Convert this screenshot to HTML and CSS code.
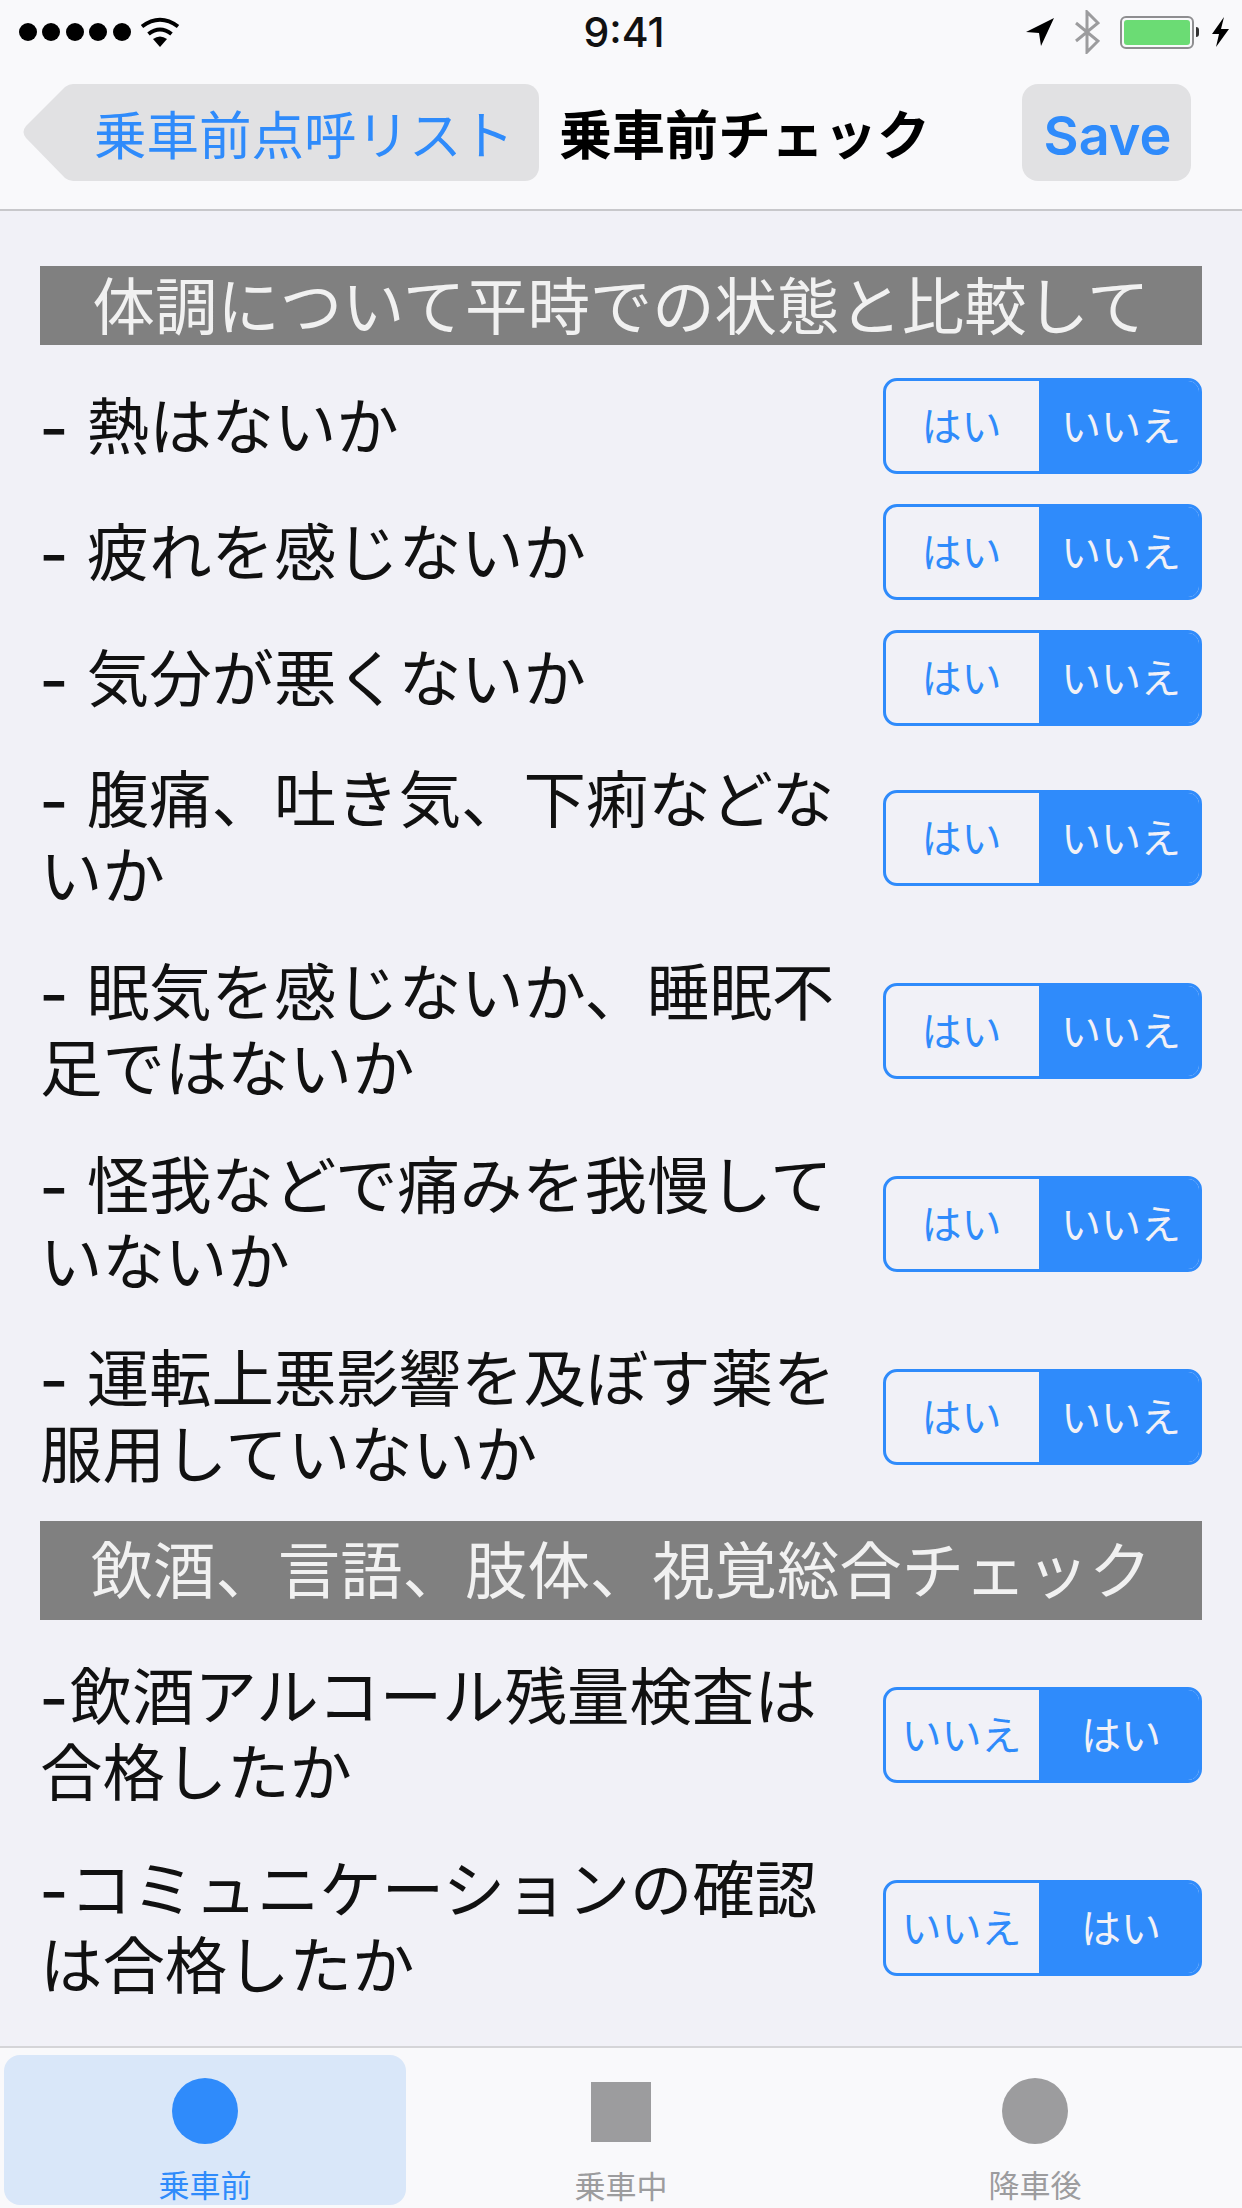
FILE: index.html
```html
<!DOCTYPE html>
<html lang="ja">
<head>
  <meta charset="UTF-8">
  <meta name="viewport" content="width=device-width, initial-scale=1.0">
  <title>乗車前チェック</title>
  <link rel="stylesheet" href="styles.css">
</head>
<body>
  <div class="screen">
    <header class="top">
      <div class="status">
        <div class="status-left">
          <span class="dot"></span><span class="dot"></span><span class="dot"></span><span class="dot"></span><span class="dot"></span>
          <svg class="wifi" width="40" height="30" viewBox="0 0 40 30">
            <path d="M20 30 L13 22 Q20 17 27 22 Z" fill="#000"/>
            <path d="M8.5 17 Q20 8 31.500 17" fill="none" stroke="#000" stroke-width="4"/>
            <path d="M2 9.500 Q20 -4 38 9.500" fill="none" stroke="#000" stroke-width="4"/>
          </svg>
        </div>
        <div class="status-time">9:41</div>
        <div class="status-right">
          <svg width="28" height="28" viewBox="0 0 28 28"><path d="M28 0 L0 14 L13 15 L15 28 Z" fill="#000"/></svg>
          <svg class="bt" width="26" height="44" viewBox="0 0 26 44">
            <path d="M2 13 L24 31 L13 42 L13 2 L24 13 L2 31" fill="none" stroke="#9c9c9e" stroke-width="3"/>
          </svg>
          <div class="battery"><div class="battery-fill"></div></div>
          <span class="battery-nub"></span>
          <svg class="bolt" width="17" height="30" viewBox="0 0 17 30"><path d="M12 0 L0 17 L7 17 L4 30 L17 12 L9 12 Z" fill="#000"/></svg>
        </div>
      </div>
      <nav class="nav">
        <a class="back">
          <svg class="back-tip" width="57" height="97" viewBox="0 0 57 97"><path d="M57 0 L50 0 Q46 0 42 3 L3 42 Q-2 48 3 54 L42 94 Q46 97 50 97 L57 97 Z" fill="#e1e1e3"/></svg>
          <span class="back-label">乗車前点呼リスト</span>
        </a>
        <h1 class="title">乗車前チェック</h1>
        <a class="save">Save</a>
      </nav>
    </header>

    <main class="content">
      <h2 class="section">体調について平時での状態と比較して</h2>
      <div class="row">
        <p class="question">- 熱はないか</p>
        <div class="seg"><span>はい</span><span class="on">いいえ</span></div>
      </div>
      <div class="row">
        <p class="question">- 疲れを感じないか</p>
        <div class="seg"><span>はい</span><span class="on">いいえ</span></div>
      </div>
      <div class="row">
        <p class="question">- 気分が悪くないか</p>
        <div class="seg"><span>はい</span><span class="on">いいえ</span></div>
      </div>
      <div class="row tall">
        <p class="question">- 腹痛、吐き気、下痢などないか</p>
        <div class="seg"><span>はい</span><span class="on">いいえ</span></div>
      </div>
      <div class="row tall">
        <p class="question">- 眠気を感じないか、睡眠不足ではないか</p>
        <div class="seg"><span>はい</span><span class="on">いいえ</span></div>
      </div>
      <div class="row tall">
        <p class="question">- 怪我などで痛みを我慢していないか</p>
        <div class="seg"><span>はい</span><span class="on">いいえ</span></div>
      </div>
      <div class="row tall">
        <p class="question">- 運転上悪影響を及ぼす薬を服用していないか</p>
        <div class="seg"><span>はい</span><span class="on">いいえ</span></div>
      </div>

      <h2 class="section second">飲酒、言語、肢体、視覚総合チェック</h2>
      <div class="row tall">
        <p class="question">-飲酒アルコール残量検査は合格したか</p>
        <div class="seg"><span>いいえ</span><span class="on">はい</span></div>
      </div>
      <div class="row tall">
        <p class="question">-コミュニケーションの確認は合格したか</p>
        <div class="seg"><span>いいえ</span><span class="on">はい</span></div>
      </div>
    </main>

    <footer class="tabs">
      <div class="tab active">
        <span class="tab-icon circle"></span>
        <span class="tab-label">乗車前</span>
      </div>
      <div class="tab">
        <span class="tab-icon square"></span>
        <span class="tab-label">乗車中</span>
      </div>
      <div class="tab">
        <span class="tab-icon circle"></span>
        <span class="tab-label">降車後</span>
      </div>
    </footer>
  </div>
</body>
</html>
```

FILE: styles.css
```css
* { box-sizing: border-box; }
body {
  margin: 0;
  background: #f1f1f7;
  color: #111;
  font-family: "Noto Sans CJK JP", "Noto Sans", sans-serif;
}
.screen {
  width: 1242px;
  height: 2208px;
  display: flex;
  flex-direction: column;
  overflow: hidden;
}

/* status bar + nav */
.top {
  height: 211px;
  background: #f9f9fb;
  border-bottom: 2px solid #c8c8cb;
}
.status {
  height: 64px;
  padding: 0 13px 0 19px;
  display: flex;
  align-items: center;
  justify-content: space-between;
}
.status-left, .status-right {
  width: 440px;
  display: flex;
  align-items: center;
}
.status-right { justify-content: flex-end; }
.dot {
  width: 18px;
  height: 18px;
  margin-right: 5.400px;
  border-radius: 50%;
  background: #000;
}
.wifi { margin-left: 4px; }
.status-time {
  font-family: Inter, sans-serif;
  font-size: 41px;
  font-weight: 500;
  color: #111;
}
.bt { margin: 0 20px; }
.battery {
  width: 74px;
  height: 33px;
  padding: 2px;
  border: 2px solid #8e8e90;
  border-radius: 6px;
}
.battery-fill {
  height: 100%;
  border-radius: 3px;
  background: #6bdc74;
}
.battery-nub {
  width: 3px;
  height: 10px;
  margin: 0 13px 0 2px;
  border-radius: 0 3px 3px 0;
  background: #333;
}
.nav {
  height: 145px;
  padding: 20px 51px 0 23px;
  display: flex;
  align-items: flex-start;
}
.back {
  display: flex;
  height: 97px;
}
.back-tip { display: block; }
.back-label {
  width: 459px;
  padding-left: 14px;
  border-radius: 0 14px 14px 0;
  background: #e1e1e3;
  color: #2f8bfb;
  font-size: 52.500px;
  line-height: 97px;
  white-space: nowrap;
}
.title {
  flex: 1;
  margin: 0;
  padding-left: 20px;
  font-size: 53px;
  font-weight: 700;
  line-height: 97px;
  color: #000;
  white-space: nowrap;
}
.save {
  width: 169px;
  height: 97px;
  padding: 3px 0 0 2px;
  border-radius: 16px;
  background: #e1e1e3;
  color: #2f8bfb;
  font-family: Inter, sans-serif;
  font-size: 54px;
  font-weight: 600;
  line-height: 97px;
  text-align: center;
}

/* check list */
.content {
  flex: 1;
  padding: 55px 40px 0;
}
.section {
  height: 79px;
  margin: 0 0 18px;
  background: #808080;
  color: #f1f1f1;
  font-size: 62.400px;
  font-weight: 400;
  line-height: 74px;
  text-align: center;
  white-space: nowrap;
}
.section.second {
  height: 99px;
  margin-top: 8px;
  line-height: 93px;
}
.row {
  height: 126px;
  display: flex;
  align-items: center;
  justify-content: space-between;
}
.row.tall { height: 193px; }
.question {
  width: 800px;
  margin: 0 0 7px;
  font-size: 62.400px;
  line-height: 76px;
  word-spacing: 3px;
}
/* the hyphen is longer than Noto's, so it gets its own size */
.question::first-letter {
  margin-right: 2px;
  font-size: 80px;
  line-height: 0;
  vertical-align: -4px;
}
.seg {
  width: 319px;
  height: 96px;
  display: flex;
  border: 3px solid #2f8bfb;
  border-radius: 14px;
  overflow: hidden;
  color: #2f8bfb;
  font-size: 40px;
}
.seg span {
  width: 153px;
  padding-right: 2px;
  text-align: center;
  line-height: 86px;
}
.seg .on {
  width: 160px;
  padding: 0 0 0 4px;
  background: #2f8bfb;
  color: #f1f1f7;
}

/* tab bar */
.tabs {
  height: 162px;
  padding: 7px 0 3px 4px;
  display: flex;
  background: #f9f9fb;
  border-top: 2px solid #d5d5d8;
}
.tab {
  width: 414px;
  display: flex;
  flex-direction: column;
  align-items: center;
  color: #9c9c9e;
}
.tab.active {
  width: 402px;
  margin-right: 8px;
  border-radius: 16px;
  background: #d9e7f9;
  color: #2f8bfb;
}
.tab-icon {
  width: 66px;
  height: 66px;
  margin-top: 23px;
  background: currentColor;
}
.tab-icon.circle { border-radius: 50%; }
.tab-icon.square {
  width: 60px;
  height: 60px;
  margin: 27px 0 3px;
}
.tab-label {
  margin-top: 22px;
  font-size: 31px;
  line-height: 36px;
}
```
